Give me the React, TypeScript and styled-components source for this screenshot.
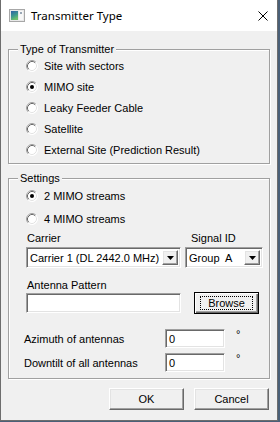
import React from "react";
import styled, { createGlobalStyle, css } from "styled-components";

const GlobalStyle = createGlobalStyle`
  html, body {
    margin: 0;
    padding: 0;
    background: #4a6078;
  }
  body {
    font-family: "Liberation Sans", Arial, sans-serif;
    font-size: 11px;
    color: #000;
  }
`;

const sunken = css`
  box-sizing: border-box;
  background: #fff;
  border-top: 1px solid #a0a0a0;
  border-left: 1px solid #a0a0a0;
  border-bottom: 1px solid #fff;
  border-right: 1px solid #fff;
  box-shadow: inset 1px 1px 0 #696969, inset -1px -1px 0 #e3e3e3;
`;

const raised = css`
  box-sizing: border-box;
  background: #f0f0f0;
  border-top: 1px solid #fff;
  border-left: 1px solid #fff;
  border-bottom: 1px solid #696969;
  border-right: 1px solid #696969;
  box-shadow: inset -1px -1px 0 #a0a0a0, inset 1px 1px 0 #e3e3e3;
`;

const Window = styled.div`
  width: 278px;
  height: 421px;
  box-sizing: border-box;
  border: 1px solid #6d6d6d;
  border-top: none;
  background: #f0f0f0;
  display: flex;
  flex-direction: column;
`;

const TitleBar = styled.div`
  height: 31px;
  flex: none;
  background: #fff;
  display: flex;
  align-items: center;
  padding-left: 8px;
`;

const TitleText = styled.span`
  margin-left: 6px;
  font-family: "Noto Sans", "Open Sans", sans-serif;
  font-size: 11.5px;
  color: #000;
`;

const CloseIcon = styled.svg`
  margin-left: auto;
  margin-right: 9px;
`;

const Body = styled.div`
  display: flex;
  flex-direction: column;
  padding: 18px 0 0 7px;
`;

const GroupBox = styled.div<{ $mt?: number }>`
  margin-top: ${p => p.$mt ?? 0}px;
  width: 262px;
  box-sizing: border-box;
  border: 1px solid #a0a0a0;
  box-shadow: 1px 1px 0 #fff, inset 1px 1px 0 #fff;
  display: flex;
  flex-direction: column;
  padding-bottom: ${p => (p.$mt ? 6 : 3)}px;
`;

const Legend = styled.div`
  align-self: flex-start;
  margin: -7px 0 0 9px;
  padding: 0 2px;
  height: 12px;
  line-height: 12px;
  background: #f0f0f0;
`;

const RadioRow = styled.label<{ $h: number }>`
  height: ${p => p.$h}px;
  display: flex;
  align-items: center;
  gap: 6px;
  padding-left: 17px;
  white-space: nowrap;
`;

const FieldGrid = styled.div`
  margin-top: 1px;
  padding-left: 17px;
  display: grid;
  grid-template-columns: 155px 78px;
  column-gap: 4px;
  row-gap: 2px;
`;

const FieldLabel = styled.div<{ $indent?: number }>`
  height: 14px;
  line-height: 14px;
  padding-left: ${p => p.$indent ?? 1}px;
  white-space: nowrap;
`;

const SelectBox = styled.div`
  ${sunken};
  height: 21px;
  display: flex;
  align-items: center;
  padding: 2px;
  white-space: pre;
`;

const SelectText = styled.span`
  padding-left: 1px;
  flex: 1;
  overflow: hidden;
`;

const ArrowButton = styled.div`
  ${raised};
  width: 16px;
  height: 15px;
  flex: none;
  display: flex;
  align-items: center;
  justify-content: center;
`;

const PatternLabel = styled.div`
  margin-top: 10px;
  padding-left: 18px;
  height: 14px;
  line-height: 14px;
`;

const PatternRow = styled.div`
  display: flex;
  align-items: flex-start;
  padding-left: 17px;
`;

const TextBox = styled.div<{ $w: number; $h: number }>`
  ${sunken};
  width: ${p => p.$w}px;
  height: ${p => p.$h}px;
  display: flex;
  align-items: center;
  padding-left: 3px;
`;

const PatternInput = styled(TextBox)`
  margin-top: 1px;
`;

const PushButton = styled.button<{ $default?: boolean }>`
  ${raised};
  width: ${p => (p.$default ? 65 : 75)}px;
  height: 22px;
  margin: 0;
  padding: 0;
  font: inherit;
  color: #000;
  display: flex;
  align-items: center;
  justify-content: center;
  ${p =>
    p.$default &&
    css`
      margin-left: 13px;
      border: 1px solid #000;
      box-shadow: inset 1px 1px 0 #fff, inset -1px -1px 0 #696969,
        inset -2px -2px 0 #a0a0a0;
    `}
`;

const FocusRect = styled.span`
  border: 1px dotted #000;
  width: 51px;
  height: 12px;
  line-height: 12px;
  display: flex;
  align-items: center;
  justify-content: center;
`;

const AngleRow = styled.div<{ $mt: number }>`
  margin-top: ${p => p.$mt}px;
  height: 19px;
  display: flex;
  align-items: center;
  padding-left: 15px;
`;

const AngleLabel = styled.span`
  width: 141px;
  white-space: nowrap;
`;

const Degree = styled.span`
  align-self: flex-start;
  margin-left: 11px;
  line-height: 10px;
`;

const ButtonRow = styled.div`
  margin-top: 9px;
  width: 262px;
  display: flex;
  justify-content: flex-end;
  gap: 10px;
  padding-right: 1px;
  box-sizing: border-box;
`;

const Radio: React.FC<{ checked?: boolean }> = ({ checked }) => (
  <svg width="12" height="12" viewBox="0 0 12 12">
    <circle cx="6" cy="6" r="5.5" fill="#fff" />
    <path d="M2.11 9.89 A5.5 5.5 0 0 1 9.89 2.11" stroke="#a0a0a0" fill="none" />
    <path d="M9.89 2.11 A5.5 5.5 0 0 1 2.11 9.89" stroke="#fff" fill="none" />
    <path d="M2.82 9.18 A4.5 4.5 0 0 1 9.18 2.82" stroke="#696969" fill="none" />
    <path d="M9.18 2.82 A4.5 4.5 0 0 1 2.82 9.18" stroke="#e3e3e3" fill="none" />
    {checked && <circle cx="6" cy="6" r="2" fill="#000" />}
  </svg>
);

const Arrow = () => (
  <svg width="7" height="4" viewBox="0 0 7 4">
    <path d="M0 0 H7 L3.5 4 Z" fill="#000" />
  </svg>
);

const Select: React.FC<{ value: string }> = ({ value }) => (
  <SelectBox>
    <SelectText>{value}</SelectText>
    <ArrowButton>
      <Arrow />
    </ArrowButton>
  </SelectBox>
);

const AppIcon = () => (
  <svg width="16" height="13" viewBox="0 0 16 13">
    <defs>
      <linearGradient id="pane" x1="0" y1="0" x2="0.4" y2="1">
        <stop offset="0" stopColor="#2f5fa8" />
        <stop offset="0.6" stopColor="#3f9a8c" />
        <stop offset="1" stopColor="#6fbf6a" />
      </linearGradient>
    </defs>
    <rect x="0.5" y="0.5" width="15" height="12" fill="#e9e9e9" stroke="#a7a7a7" />
    <rect x="2" y="2" width="7" height="9" fill="url(#pane)" />
    <rect x="10" y="2" width="4" height="9" fill="#f7f7f7" />
    <rect x="11" y="3" width="2" height="2" fill="#9aa7b5" />
  </svg>
);

const App: React.FC = () => {
  const types = [
    { label: "Site with sectors" },
    { label: "MIMO site", checked: true },
    { label: "Leaky Feeder Cable" },
    { label: "Satellite" },
    { label: "External Site (Prediction Result)" },
  ];

  const streams = [
    { label: "2 MIMO streams", checked: true },
    { label: "4 MIMO streams" },
  ];

  return (
    <Window>
      <GlobalStyle />
      <TitleBar>
        <AppIcon />
        <TitleText>Transmitter Type</TitleText>
        <CloseIcon width="10" height="10" viewBox="0 0 10 10">
          <path d="M0.5 0.5 L9.5 9.5 M9.5 0.5 L0.5 9.5" stroke="#000" strokeWidth="1" />
        </CloseIcon>
      </TitleBar>
      <Body>
        <GroupBox>
          <Legend>Type of Transmitter</Legend>
          {types.map(t => (
            <RadioRow key={t.label} $h={21}>
              <Radio checked={t.checked} />
              {t.label}
            </RadioRow>
          ))}
        </GroupBox>

        <GroupBox $mt={14}>
          <Legend>Settings</Legend>
          {streams.map(s => (
            <RadioRow key={s.label} $h={23}>
              <Radio checked={s.checked} />
              {s.label}
            </RadioRow>
          ))}
          <FieldGrid>
            <FieldLabel>Carrier</FieldLabel>
            <FieldLabel $indent={6}>Signal ID</FieldLabel>
            <Select value="Carrier 1 (DL 2442.0 MHz)" />
            <Select value="Group  A" />
          </FieldGrid>
          <PatternLabel>Antenna Pattern</PatternLabel>
          <PatternRow>
            <PatternInput $w={155} $h={20} />
            <PushButton $default>
              <FocusRect>Browse</FocusRect>
            </PushButton>
          </PatternRow>
          <AngleRow $mt={15}>
            <AngleLabel>Azimuth of antennas</AngleLabel>
            <TextBox $w={60} $h={19}>0</TextBox>
            <Degree>°</Degree>
          </AngleRow>
          <AngleRow $mt={5}>
            <AngleLabel>Downtilt of all antennas</AngleLabel>
            <TextBox $w={60} $h={19}>0</TextBox>
            <Degree>°</Degree>
          </AngleRow>
        </GroupBox>

        <ButtonRow>
          <PushButton>OK</PushButton>
          <PushButton>Cancel</PushButton>
        </ButtonRow>
      </Body>
    </Window>
  );
};

export default App;
